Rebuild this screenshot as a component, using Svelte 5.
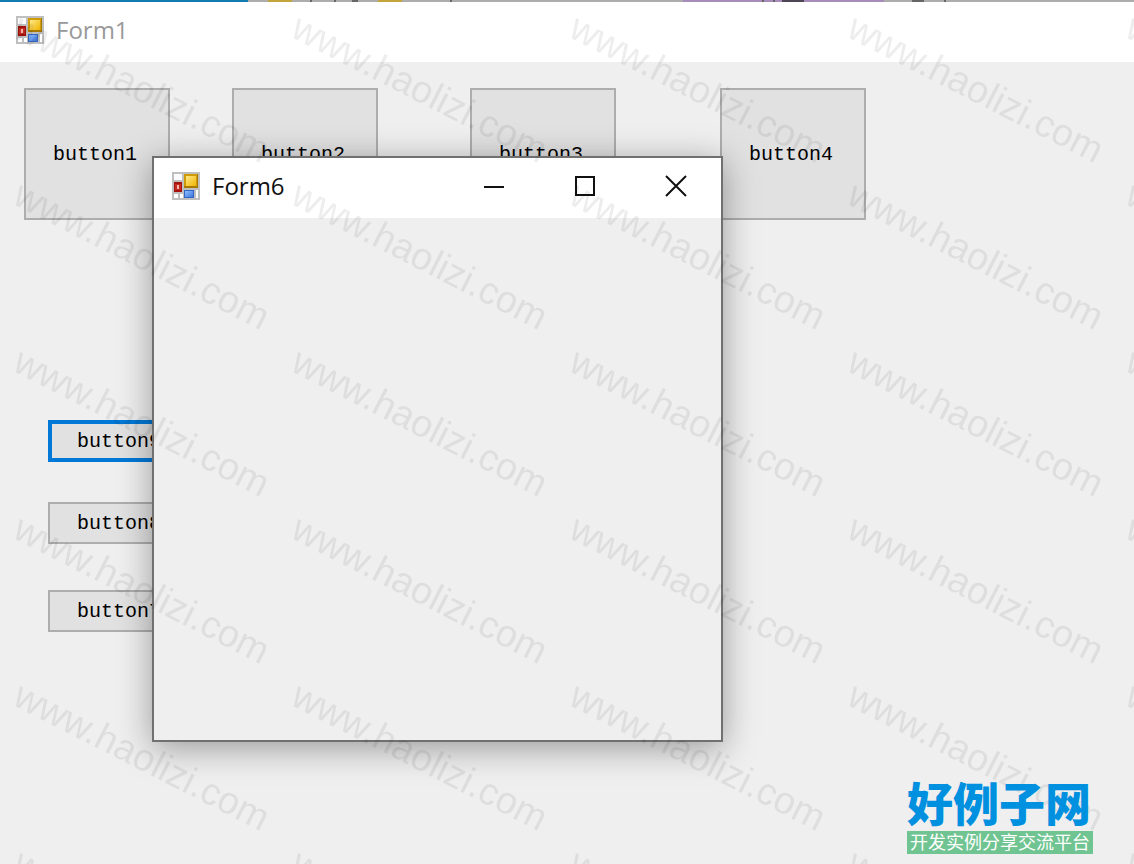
<script lang="ts">
	const topButtons = ['button1', 'button2', 'button3', 'button4'];
	const sideButtons = ['button9', 'button8', 'button7'];
</script>

{#snippet formIcon()}
	<svg class="form-icon" viewBox="0 0 28 28" aria-hidden="true">
		<defs>
			<linearGradient id="gold" x1="0" y1="0" x2="1" y2="1">
				<stop offset="0" stop-color="#ffe98a" />
				<stop offset="1" stop-color="#f0b400" />
			</linearGradient>
			<linearGradient id="sky" x1="0" y1="0" x2="1" y2="1">
				<stop offset="0" stop-color="#8dbcff" />
				<stop offset="1" stop-color="#3f78dc" />
			</linearGradient>
		</defs>
		<rect width="28" height="28" fill="#bfbfbf" />
		<rect x="2" y="2" width="8" height="6" fill="#fbfbfb" />
		<rect x="2" y="22" width="4" height="4" fill="#fff" />
		<rect x="8" y="22" width="3" height="4" fill="#fff" />
		<rect x="24" y="18" width="2" height="8" fill="#fff" />
		<rect x="12" y="2" width="14" height="14" fill="#a87a00" />
		<rect x="12" y="2" width="13" height="12" fill="#cf9c08" />
		<rect x="14" y="4" width="10" height="10" fill="url(#gold)" />
		<rect x="2" y="10" width="8" height="10" fill="#a3120c" />
		<rect x="3" y="12" width="6" height="6" fill="#c92d21" />
		<rect x="5" y="13" width="2" height="4" fill="#f3b5aa" />
		<rect x="12" y="18" width="10" height="8" fill="#3366c4" />
		<rect x="13" y="19" width="8" height="6" fill="url(#sky)" />
	</svg>
{/snippet}

<div class="desktop">
	<svg class="backdrop" height="2" aria-hidden="true">
		<rect width="100%" height="2" fill="#adadad" />
		<rect width="248" height="2" fill="#0f7bb0" />
		<rect x="268" width="24" height="2" fill="#c4a53c" />
		<rect x="378" width="24" height="2" fill="#c4a53c" />
		<rect x="683" width="201" height="2" fill="#a78bb8" />
		<path
			d="M311 0v2M335 0v2M352 1h6M451 0v2M763 0v2M774 0v2M912 1h12M945 0v2"
			stroke="#666"
			stroke-width="2"
		/>
		<path d="M782 1h22" stroke="#4d4455" stroke-width="2" />
	</svg>

	<main class="form">
		<header class="titlebar inactive">
			{@render formIcon()}
			<h1>Form1</h1>
		</header>
		<div class="client">
			<div class="top-row">
				{#each topButtons as label (label)}
					<button class="btn {label}">{label}</button>
				{/each}
			</div>
			<div class="side-col">
				{#each sideButtons as label (label)}
					<button class="btn {label}" class:focused={label === 'button9'}>{label}</button>
				{/each}
			</div>
		</div>
	</main>

	<section class="form dialog" aria-label="Form6">
		<header class="titlebar">
			{@render formIcon()}
			<h2>Form6</h2>
			<div class="controls">
				<button aria-label="Minimize">
					<svg viewBox="0 0 22 22"><path d="M1 12h20" /></svg>
				</button>
				<button aria-label="Maximize">
					<svg viewBox="0 0 22 22"><path d="M2 2h18v18H2z" /></svg>
				</button>
				<button aria-label="Close">
					<svg viewBox="0 0 22 22"><path d="M1 1l20 20M21 1L1 21" /></svg>
				</button>
			</div>
		</header>
	</section>

	<svg class="watermark" aria-hidden="true">
		<defs>
			<pattern id="mark" width="278" height="167" patternUnits="userSpaceOnUse">
				<text transform="translate(11 36) rotate(27)">www.haolizi.com</text>
			</pattern>
		</defs>
		<rect width="100%" height="100%" fill="url(#mark)" />
	</svg>

	<div class="logo">
		<strong>好例子网</strong>
		<span>开发实例分享交流平台</span>
	</div>
</div>

<style>
	:global(body) {
		margin: 0;
		background: #efefef;
	}

	.desktop {
		position: relative;
		display: flex;
		flex-direction: column;
		min-height: 100vh;
		overflow: hidden;
		background: #efefef;
		font-family: 'Open Sans', 'Noto Sans', sans-serif;
	}
	.backdrop {
		display: block;
		width: 100%;
	}

	.titlebar {
		display: flex;
		align-items: center;
		box-sizing: border-box;
		height: 60px;
		padding: 0 0 4px 18px;
		background: #fff;
		color: #111;
	}
	.titlebar.inactive {
		padding-left: 16px;
		color: #999;
	}
	.titlebar h1,
	.titlebar h2 {
		margin: 0 0 0 12px;
		font-size: 24px;
		line-height: 32px;
		font-weight: 400;
	}
	.form-icon {
		width: 28px;
		height: 28px;
	}

	.client {
		padding: 26px 24px;
	}
	.top-row {
		display: flex;
	}
	.side-col {
		display: flex;
		flex-direction: column;
		align-items: flex-start;
		padding: 200px 24px 0;
	}
	.btn {
		flex: none;
		box-sizing: border-box;
		width: 146px;
		height: 42px;
		padding: 2px 4px 0 0;
		border: 2px solid #adadad;
		background: #e1e1e1;
		color: #000;
		font-family: 'Liberation Mono', monospace;
		font-size: 20px;
		line-height: 24px;
	}
	.btn.focused {
		border: 4px solid #0078d7;
	}
	.top-row .btn {
		height: 132px;
	}
	.button2 {
		margin-left: 62px;
	}
	.button3 {
		margin-left: 92px;
	}
	.button4 {
		margin-left: 104px;
	}
	.button8 {
		margin-top: 40px;
	}
	.button7 {
		margin-top: 46px;
	}

	.dialog {
		position: absolute;
		top: 156px;
		left: 152px;
		box-sizing: border-box;
		width: 571px;
		height: 586px;
		border: 2px solid #707070;
		background: #efefef;
		box-shadow: 0 6px 32px rgba(0, 0, 0, 0.36);
	}
	.controls {
		display: flex;
		margin-left: auto;
	}
	.controls button {
		display: grid;
		place-items: center;
		width: 91px;
		height: 56px;
		padding: 0;
		border: 0;
		background: none;
	}
	.controls svg {
		width: 22px;
		height: 22px;
		fill: none;
		stroke: #111;
		stroke-width: 2;
	}

	.watermark {
		position: absolute;
		inset: 0;
		width: 100%;
		height: 100%;
		pointer-events: none;
	}
	.watermark text {
		font-family: 'Liberation Sans', Arial, sans-serif;
		font-size: 38px;
		fill: #000;
		fill-opacity: 0.07;
	}

	.logo {
		position: absolute;
		right: 41px;
		bottom: 10px;
		display: flex;
		flex-direction: column;
		font-family: 'Noto Sans CJK SC', sans-serif;
	}
	.logo strong {
		padding-bottom: 6px;
		color: #0090e0;
		font-size: 46px;
		line-height: 48px;
		font-weight: 900;
	}
	.logo span {
		padding: 0 3px 3px;
		background: #6fc491;
		color: #fff;
		font-size: 18px;
		line-height: 20px;
	}
</style>
